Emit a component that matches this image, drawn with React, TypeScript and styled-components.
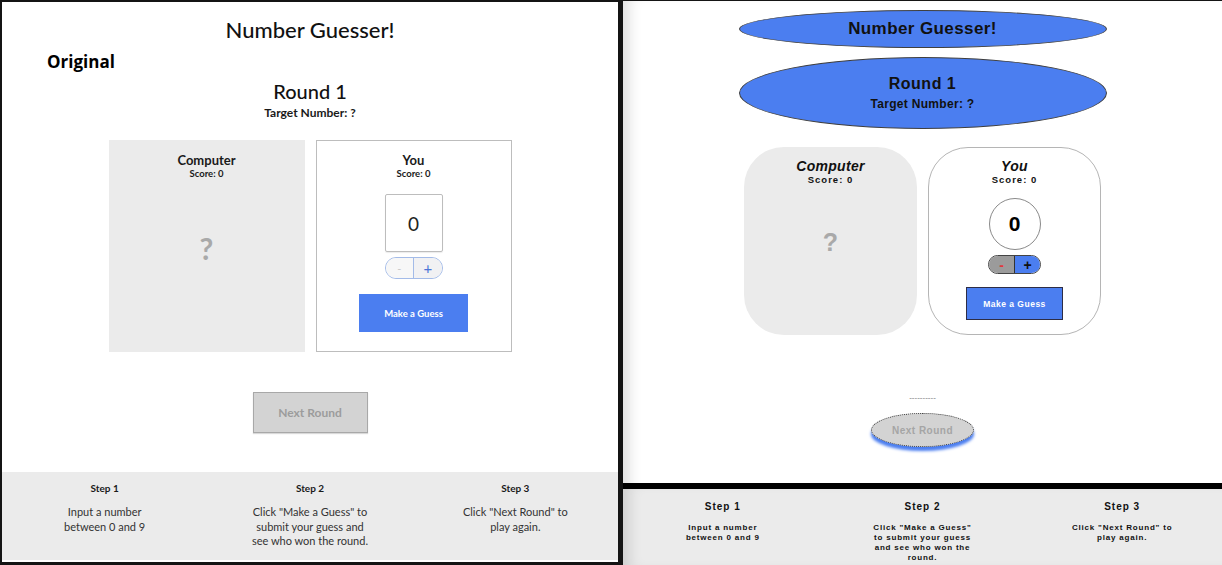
import React from "react";
import styled, { createGlobalStyle } from "styled-components";

const BLUE = "#4b7ef0";

const GlobalStyle = createGlobalStyle`
  html, body {
    margin: 0;
    padding: 0;
    background: #141414;
  }
  * {
    box-sizing: border-box;
  }
`;

const Screen = styled.div`
  display: flex;
  align-items: flex-start;
  gap: 5px;
  width: 1222px;
  height: 565px;
  padding-left: 2px;
  overflow: hidden;
  background: #141414;
`;

/* ---------- left: the original page ---------- */

const OrigPanel = styled.div`
  display: flex;
  flex-direction: column;
  align-items: center;
  width: 616px;
  height: 560px;
  margin-top: 2px;
  padding-bottom: 2px;
  background: #fff;
  font-family: Lato, "Open Sans", sans-serif;
  color: #1a1a1a;
`;

const OrigTitle = styled.h1`
  margin: 13px 0 0;
  font-size: 22px;
  line-height: 30px;
  font-weight: 500;
  color: #111;
`;

const Label = styled.div`
  align-self: flex-start;
  margin-top: 6px;
  padding-left: 45px;
  font-family: "Open Sans", sans-serif;
  font-size: 17px;
  line-height: 22px;
  font-weight: 700;
  color: #000;
`;

const OrigRound = styled.h2`
  margin: 6px 0 0;
  font-size: 20px;
  line-height: 24px;
  font-weight: 500;
  color: #111;
`;

const OrigTarget = styled.div`
  margin-top: 2px;
  font-size: 12px;
  line-height: 16px;
  font-weight: 700;
`;

const OrigCards = styled.div`
  display: flex;
  gap: 11px;
  margin-top: 19px;
`;

const OrigCard = styled.div<{ $outlined?: boolean }>`
  display: flex;
  flex-direction: column;
  align-items: center;
  width: 196px;
  height: 212px;
  padding-top: ${(p) => (p.$outlined ? 11 : 12)}px;
  background: ${(p) => (p.$outlined ? "#fff" : "#ebebeb")};
  border: ${(p) => (p.$outlined ? "1px solid #bdbdbd" : "none")};
`;

const OrigName = styled.div`
  font-size: 13px;
  line-height: 16px;
  font-weight: 700;
`;

const OrigScore = styled.div`
  font-size: 9.5px;
  line-height: 12px;
  font-weight: 700;
`;

const OrigMystery = styled.div`
  margin-top: 50px;
  font-size: 30px;
  line-height: 36px;
  font-weight: 700;
  color: #a9a9a9;
`;

const OrigInput = styled.div`
  display: flex;
  align-items: center;
  justify-content: center;
  width: 58px;
  height: 58px;
  margin-top: 14px;
  border: 1px solid #bdbdbd;
  border-radius: 2px;
  box-shadow: 0 1px 1px rgba(0, 0, 0, 0.08);
  font-size: 19px;
  color: #222;
`;

const OrigStepper = styled.div`
  display: flex;
  width: 58px;
  height: 22px;
  margin-top: 5px;
  border: 1px solid #a3bbe8;
  border-radius: 11px;
  overflow: hidden;
`;

const OrigStep = styled.div<{ $first?: boolean }>`
  flex: 1;
  display: flex;
  align-items: center;
  justify-content: center;
  background: ${(p) => (p.$first ? "#f7f7f7" : "#f1f1f3")};
  border-left: ${(p) => (p.$first ? "none" : "1px solid #a3bbe8")};
  font-size: ${(p) => (p.$first ? 11 : 15)}px;
  color: ${(p) => (p.$first ? "#c8c8c8" : "#4a74d8")};
`;

const OrigGuess = styled.div`
  display: flex;
  align-items: center;
  justify-content: center;
  width: 109px;
  height: 38px;
  margin-top: 15px;
  background: ${BLUE};
  color: #fff;
  font-size: 9.5px;
  font-weight: 700;
`;

const OrigNext = styled.div`
  display: flex;
  align-items: center;
  justify-content: center;
  width: 115px;
  height: 41px;
  margin-top: 40px;
  background: #d3d3d3;
  border: 1px solid #a8a8a8;
  box-shadow: 0 1px 1px rgba(0, 0, 0, 0.15);
  color: #9c9c9c;
  font-size: 12px;
  font-weight: 700;
`;

const OrigFooter = styled.div`
  display: grid;
  grid-template-columns: repeat(3, 1fr);
  width: 100%;
  height: 88px;
  margin-top: auto;
  padding-top: 9px;
  background: #ebebeb;
`;

const OrigStepCol = styled.div`
  display: flex;
  flex-direction: column;
  align-items: center;
  text-align: center;
`;

const OrigStepTitle = styled.div`
  font-size: 10px;
  line-height: 14px;
  font-weight: 700;
`;

const OrigStepText = styled.div`
  width: 118px;
  margin-top: 10px;
  font-size: 11px;
  line-height: 14.5px;
  color: #333;
`;

/* ---------- right: the restyled page ---------- */

const NewPanel = styled.div`
  display: flex;
  flex-direction: column;
  align-items: center;
  width: 599px;
  height: 564px;
  margin-top: 1px;
  background: #fff;
  box-shadow: inset 14px 0 14px -8px rgba(0, 0, 0, 0.13);
  font-family: "Liberation Sans", Arial, sans-serif;
  color: #111;
`;

const Oval = styled.div<{ $h: number; $top: number }>`
  display: flex;
  flex-direction: column;
  align-items: center;
  justify-content: center;
  width: 368px;
  height: ${(p) => p.$h}px;
  margin-top: ${(p) => p.$top}px;
  border: 1px solid #3f3f3f;
  border-radius: 50%;
  background: ${BLUE};
`;

const NewTitle = styled.h1`
  margin: 0;
  font-size: 17px;
  line-height: 20px;
  font-weight: 700;
  letter-spacing: 0.4px;
`;

const NewRound = styled.h2`
  margin: 0;
  font-size: 16px;
  line-height: 20px;
  font-weight: 700;
  letter-spacing: 0.5px;
`;

const NewTarget = styled.div`
  margin-top: 2px;
  font-size: 12px;
  line-height: 16px;
  font-weight: 700;
  letter-spacing: 0.3px;
`;

const NewCards = styled.div`
  display: flex;
  gap: 11px;
  margin-top: 18px;
`;

const NewCard = styled.div<{ $outlined?: boolean }>`
  display: flex;
  flex-direction: column;
  align-items: center;
  width: 173px;
  height: 188px;
  padding-top: ${(p) => (p.$outlined ? 10 : 11)}px;
  border-radius: 40px;
  background: ${(p) => (p.$outlined ? "#fff" : "#ebebeb")};
  border: ${(p) => (p.$outlined ? "1px solid #b5b5b5" : "none")};
`;

const NewName = styled.div`
  font-size: 14px;
  line-height: 16px;
  font-weight: 700;
  font-style: italic;
  letter-spacing: 0.3px;
`;

const NewScore = styled.div`
  font-size: 9.5px;
  line-height: 12px;
  font-weight: 700;
  letter-spacing: 1px;
`;

const NewMystery = styled.div`
  margin-top: 41px;
  font-size: 25px;
  line-height: 30px;
  font-weight: 700;
  color: #a9a9a9;
`;

const NewInput = styled.div`
  display: flex;
  align-items: center;
  justify-content: center;
  width: 52px;
  height: 52px;
  margin-top: 12px;
  border: 1px solid #8a8a8a;
  border-radius: 50%;
  font-size: 21px;
  font-weight: 700;
  color: #000;
`;

const NewStepper = styled.div`
  display: flex;
  width: 53px;
  height: 19px;
  margin-top: 5px;
  border: 1px solid #444;
  border-radius: 10px;
  overflow: hidden;
`;

const NewStep = styled.div<{ $first?: boolean }>`
  flex: 1;
  display: flex;
  align-items: center;
  justify-content: center;
  background: ${(p) => (p.$first ? "#9b9b9b" : BLUE)};
  border-left: ${(p) => (p.$first ? "none" : "1px solid #333")};
  font-size: 14px;
  font-weight: 700;
  color: ${(p) => (p.$first ? "#e0393e" : "#111")};
`;

const NewGuess = styled.div`
  display: flex;
  align-items: center;
  justify-content: center;
  width: 97px;
  height: 33px;
  margin-top: 13px;
  background: ${BLUE};
  border: 1px solid #2d2d45;
  color: #fff;
  font-size: 8.5px;
  font-weight: 700;
  letter-spacing: 0.5px;
`;

const Dashes = styled.div`
  margin-top: 58px;
  font-size: 8px;
  line-height: 10px;
  color: #777;
`;

const NewNext = styled.div`
  display: flex;
  align-items: center;
  justify-content: center;
  width: 103px;
  height: 34px;
  margin-top: 10px;
  border: 1px dotted #444;
  border-radius: 50%;
  background: #d3d3d3;
  box-shadow: 0 4px 3px ${BLUE};
  color: #a5a5a5;
  font-size: 10px;
  font-weight: 700;
  letter-spacing: 0.5px;
`;

const NewFooter = styled.div`
  display: grid;
  grid-template-columns: repeat(3, 1fr);
  width: 100%;
  height: 82px;
  margin-top: auto;
  padding-top: 11px;
  border-top: 6px solid #000;
  background: #ebebeb;
  box-shadow: inset 14px 0 14px -8px rgba(0, 0, 0, 0.13);
`;

const NewStepCol = styled.div`
  display: flex;
  flex-direction: column;
  align-items: center;
  text-align: center;
`;

const NewStepTitle = styled.div`
  font-size: 10px;
  line-height: 14px;
  font-weight: 700;
  letter-spacing: 1px;
`;

const NewStepText = styled.div`
  width: 106px;
  margin-top: 9px;
  font-size: 8px;
  line-height: 10px;
  font-weight: 700;
  letter-spacing: 0.8px;
`;

const steps = [
  { title: "Step 1", text: "Input a number between 0 and 9" },
  { title: "Step 2", text: 'Click "Make a Guess" to submit your guess and see who won the round.' },
  { title: "Step 3", text: 'Click "Next Round" to play again.' },
];

const Original = () => (
  <OrigPanel>
    <OrigTitle>Number Guesser!</OrigTitle>
    <Label>Original</Label>
    <OrigRound>Round 1</OrigRound>
    <OrigTarget>Target Number: ?</OrigTarget>
    <OrigCards>
      <OrigCard>
        <OrigName>Computer</OrigName>
        <OrigScore>Score: 0</OrigScore>
        <OrigMystery>?</OrigMystery>
      </OrigCard>
      <OrigCard $outlined>
        <OrigName>You</OrigName>
        <OrigScore>Score: 0</OrigScore>
        <OrigInput>0</OrigInput>
        <OrigStepper>
          <OrigStep $first>-</OrigStep>
          <OrigStep>+</OrigStep>
        </OrigStepper>
        <OrigGuess>Make a Guess</OrigGuess>
      </OrigCard>
    </OrigCards>
    <OrigNext>Next Round</OrigNext>
    <OrigFooter>
      {steps.map((s) => (
        <OrigStepCol key={s.title}>
          <OrigStepTitle>{s.title}</OrigStepTitle>
          <OrigStepText>{s.text}</OrigStepText>
        </OrigStepCol>
      ))}
    </OrigFooter>
  </OrigPanel>
);

const Restyled = () => (
  <NewPanel>
    <Oval $h={38} $top={9}>
      <NewTitle>Number Guesser!</NewTitle>
    </Oval>
    <Oval $h={72} $top={9}>
      <NewRound>Round 1</NewRound>
      <NewTarget>Target Number: ?</NewTarget>
    </Oval>
    <NewCards>
      <NewCard>
        <NewName>Computer</NewName>
        <NewScore>Score: 0</NewScore>
        <NewMystery>?</NewMystery>
      </NewCard>
      <NewCard $outlined>
        <NewName>You</NewName>
        <NewScore>Score: 0</NewScore>
        <NewInput>0</NewInput>
        <NewStepper>
          <NewStep $first>-</NewStep>
          <NewStep>+</NewStep>
        </NewStepper>
        <NewGuess>Make a Guess</NewGuess>
      </NewCard>
    </NewCards>
    <Dashes>----------</Dashes>
    <NewNext>Next Round</NewNext>
    <NewFooter>
      {steps.map((s) => (
        <NewStepCol key={s.title}>
          <NewStepTitle>{s.title}</NewStepTitle>
          <NewStepText>{s.text}</NewStepText>
        </NewStepCol>
      ))}
    </NewFooter>
  </NewPanel>
);

export default function App() {
  return (
    <>
      <GlobalStyle />
      <Screen>
        <Original />
        <Restyled />
      </Screen>
    </>
  );
}
